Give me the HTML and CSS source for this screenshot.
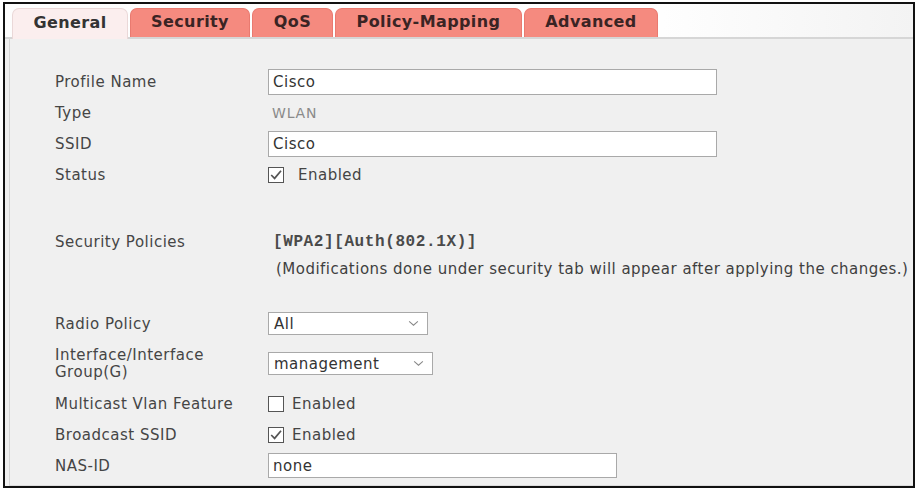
FILE: index.html
```html
<!DOCTYPE html>
<html lang="en">
  <head>
    <meta charset="UTF-8" />
    <title>WLAN Edit</title>
    <link rel="stylesheet" href="styles.css">
  </head>
  <body>
    <div class="frame">
      <div class="tabs">
        <div class="tab active">General</div>
        <div class="tab tab-security">Security</div>
        <div class="tab tab-qos">QoS</div>
        <div class="tab tab-policy">Policy-Mapping</div>
        <div class="tab tab-adv">Advanced</div>
      </div>

      <div class="panel">
        <div class="row">
          <div class="label">Profile Name</div>
          <div class="input wide">Cisco</div>
        </div>
        <div class="row">
          <div class="label">Type</div>
          <div class="value muted">WLAN</div>
        </div>
        <div class="row">
          <div class="label">SSID</div>
          <div class="input wide">Cisco</div>
        </div>
        <div class="row">
          <div class="label">Status</div>
          <div class="check-wrap">
            <span class="checkbox checked">
              <svg viewBox="0 0 16 16" width="16" height="16"><path d="M3.2 8 L6.6 11.4 L13 3.8" fill="none" stroke="#555" stroke-width="1.7"/></svg>
            </span>
            <span class="check-text">Enabled</span>
          </div>
        </div>

        <div class="row policies">
          <div class="label">Security Policies</div>
          <div class="policy-lines">
            <div class="policy-code">[WPA2][Auth(802.1X)]</div>
            <div class="policy-note">(Modifications done under security tab will appear after applying the changes.)</div>
          </div>
        </div>

        <div class="row radio">
          <div class="label">Radio Policy</div>
          <div class="select sel-radio">
            <span>All</span>
            <svg viewBox="0 0 12 8" width="11" height="7"><path d="M1 1.5 L6 6 L11 1.5" fill="none" stroke="#888" stroke-width="1.2"/></svg>
          </div>
        </div>
        <div class="row tall">
          <div class="label two-line">Interface/Interface<br>Group(G)</div>
          <div class="select sel-iface">
            <span>management</span>
            <svg viewBox="0 0 12 8" width="11" height="7"><path d="M1 1.5 L6 6 L11 1.5" fill="none" stroke="#888" stroke-width="1.2"/></svg>
          </div>
        </div>
        <div class="row">
          <div class="label">Multicast Vlan Feature</div>
          <div class="check-wrap tight">
            <span class="checkbox"></span>
            <span class="check-text">Enabled</span>
          </div>
        </div>
        <div class="row">
          <div class="label">Broadcast SSID</div>
          <div class="check-wrap tight">
            <span class="checkbox checked">
              <svg viewBox="0 0 16 16" width="16" height="16"><path d="M3.2 8 L6.6 11.4 L13 3.8" fill="none" stroke="#555" stroke-width="1.7"/></svg>
            </span>
            <span class="check-text">Enabled</span>
          </div>
        </div>
        <div class="row">
          <div class="label">NAS-ID</div>
          <div class="input nas">none</div>
        </div>
      </div>
    </div>
  </body>
</html>
```

FILE: styles.css
```css
body {
  margin: 0;
  background: #ffffff;
  font-family: "DejaVu Sans", Verdana, sans-serif;
}
.frame {
  margin: 2px 0 0 3px;
  width: 908px;
  height: 482px;
  border: 2px solid #111;
  background: #f0f0f0;
  display: flex;
  flex-direction: column;
}

/* tab strip */
.tabs {
  height: 33px;
  display: flex;
  align-items: flex-end;
  padding-left: 7px;
  gap: 2px;
  background: linear-gradient(to right, #fdfdfd, #ffffff 70%, #f3f3f3);
  border-bottom: 2px solid #d6d6d6;
}
.tab {
  height: 29px;
  box-sizing: border-box;
  background: #f58a7f;
  border: 1px solid #e97a70;
  border-bottom: none;
  border-radius: 7px 7px 0 0;
  font-weight: bold;
  font-size: 16px;
  color: #3a2424;
  letter-spacing: 0.4px;
  display: flex;
  align-items: center;
  justify-content: center;
  padding-bottom: 4px;
}
.tab.active {
  width: 116px;
  height: 31px;
  margin-bottom: -2px;
  background: #fbeeee;
  border-color: #ead8d8;
  color: #333;
}
.tab-security { width: 120px; }
.tab-qos { width: 81px; }
.tab-policy { width: 187px; }
.tab-adv { width: 134px; }

/* form body */
.panel {
  flex: 1;
  margin-left: 4px;
  border-left: 1px solid #d4d4d4;
  border-bottom: 1px solid #dcdcdc;
  padding: 27px 0 0 45px;
  color: #454545;
  font-size: 15px;
  letter-spacing: 0.5px;
}
.row {
  display: flex;
  align-items: center;
  height: 31px;
}
.label {
  width: 213px;
  flex-shrink: 0;
}
.two-line {
  line-height: 17px;
}
.value {
  padding-left: 4px;
}
.muted {
  color: #8a8a8a;
  font-size: 14px;
  letter-spacing: 0.8px;
}
.input {
  box-sizing: border-box;
  height: 26px;
  background: #fff;
  border: 1px solid #a9a9a9;
  padding-left: 4px;
  display: flex;
  align-items: center;
  color: #333;
}
.input.wide { width: 449px; }
.input.nas { width: 349px; height: 25px; }

.check-wrap {
  display: flex;
  align-items: center;
  gap: 14px;
}
.check-wrap.tight {
  gap: 8px;
}
.checkbox {
  width: 16px;
  height: 16px;
  box-sizing: border-box;
  border: 1px solid #555;
  background: #fff;
  display: flex;
  position: relative;
}
.checkbox svg {
  position: absolute;
  left: -1px;
  top: -1px;
}
.check-text {
  color: #444;
}

.row.policies {
  height: auto;
  align-items: flex-start;
  margin-top: 39px;
  line-height: 27px;
}
.policy-code {
  font-family: "Liberation Mono", "Courier New", monospace;
  font-weight: bold;
  font-size: 16px;
  letter-spacing: 0.6px;
  color: #4a4a4a;
  padding-left: 5px;
}
.policy-note {
  font-size: 15px;
  letter-spacing: 0.48px;
  color: #3f3f3f;
  padding-left: 8px;
  white-space: nowrap;
}

.row.radio {
  margin-top: 25px;
}
.row.tall {
  height: 49px;
}
.select {
  box-sizing: border-box;
  height: 23px;
  background: #fff;
  border: 1px solid #a9a9a9;
  display: flex;
  align-items: center;
  justify-content: space-between;
  padding: 0 8px 0 5px;
  color: #333;
}
.sel-radio { width: 160px; }
.sel-iface { width: 165px; }
```
